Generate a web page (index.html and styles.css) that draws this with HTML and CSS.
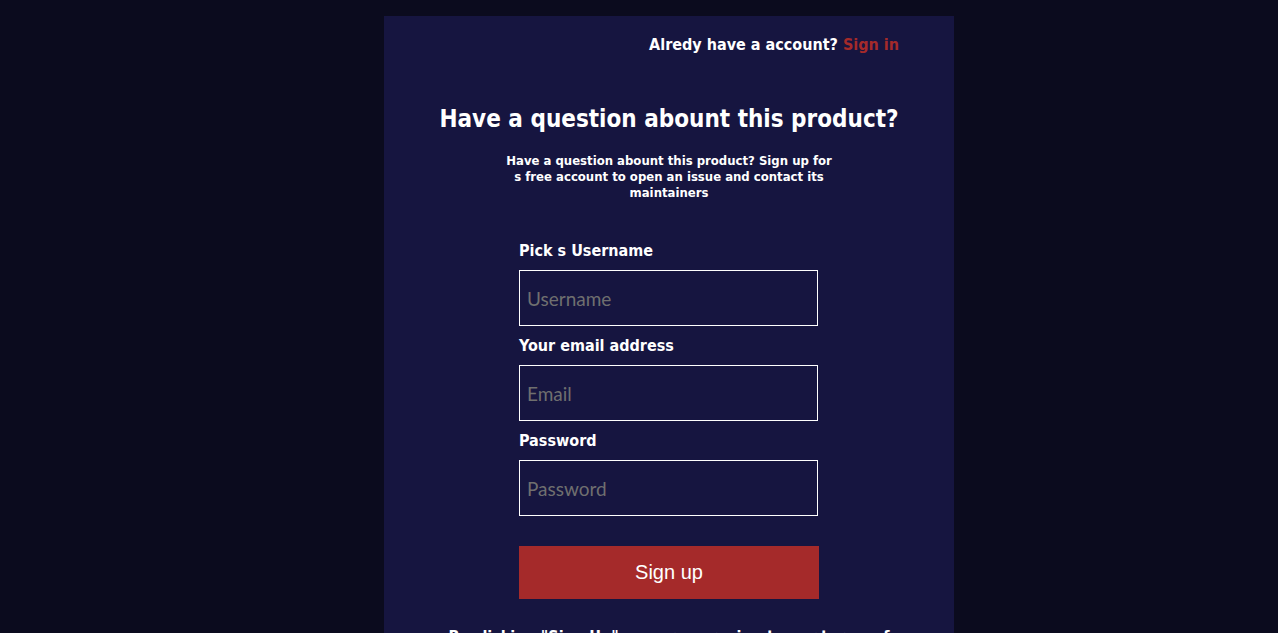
FILE: index.html
```html
<!DOCTYPE html>
<html lang="en">
<head>
<meta charset="utf-8">
<title>Sign up</title>
<link rel="stylesheet" href="styles.css">
</head>
<body>
<main class="card">
  <p class="have-account">Alredy have a account? <a class="signin" href="#">Sign in</a></p>
  <h1 class="title">Have a question abount this product?</h1>
  <p class="lead">Have a question abount this product? Sign up for s free account to open an issue and contact its maintainers</p>
  <form class="form">
    <label class="label" for="u">Pick s Username</label>
    <input class="field" id="u" type="text" placeholder="Username">
    <label class="label" for="e">Your email address</label>
    <input class="field" id="e" type="email" placeholder="Email">
    <label class="label" for="p">Password</label>
    <input class="field" id="p" type="password" placeholder="Password">
    <button class="btn" type="button">Sign up</button>
  </form>
  <p class="terms">By clicking "Sign Up" you are agreeing to our terms of service and privacy policy</p>
</main>
</body>
</html>
```

FILE: styles.css
```css
html, body {
  margin: 0;
  padding: 0;
  background: #0b0b1e;
  height: 100%;
  overflow: hidden;
}
body {
  padding-top: 16px;
  font-family: "DejaVu Sans Condensed", "DejaVu Sans", sans-serif;
  font-stretch: condensed;
  color: #ffffff;
}
.card {
  margin-left: 384px;
  width: 570px;
  min-height: 700px;
  background: #161540;
  box-sizing: border-box;
  padding: 18px 40px 0 40px;
  display: flex;
  flex-direction: column;
  align-items: center;
}
.have-account {
  align-self: flex-end;
  margin: 0 15px 0 0;
  font-size: 16px;
  font-weight: bold;
  line-height: 22px;
}
.signin {
  color: #a52a2a;
  text-decoration: none;
}
.title {
  margin: 48px 0 0;
  font-size: 24px;
  line-height: 30px;
  font-weight: bold;
  text-align: center;
}
.lead {
  margin: 19px 0 0;
  width: 332px;
  font-size: 13px;
  line-height: 16px;
  font-weight: bold;
  text-align: center;
}
.form {
  margin-top: 40px;
  width: 300px;
  display: flex;
  flex-direction: column;
}
.label {
  font-size: 16px;
  font-weight: bold;
  line-height: 19px;
  margin-bottom: 10px;
}
.field {
  box-sizing: border-box;
  width: 299px;
  height: 56px;
  margin: 0 0 10px;
  padding: 0 7px;
  background: transparent;
  border: 1px solid #ffffff;
  color: #ffffff;
  font-family: "Lato", sans-serif;
  font-stretch: normal;
  font-size: 19px;
  outline: none;
}
.field::placeholder {
  color: #6f6f6f;
}
.btn {
  margin-top: 20px;
  width: 300px;
  height: 53px;
  border: none;
  background: #a52a2a;
  color: #ffffff;
  font-family: "Liberation Sans", Arial, sans-serif;
  font-stretch: normal;
  font-size: 20px;
  cursor: pointer;
}
.terms {
  margin: 28px 0 0;
  font-size: 16px;
  line-height: 20px;
  font-weight: bold;
  text-align: center;
}
```
